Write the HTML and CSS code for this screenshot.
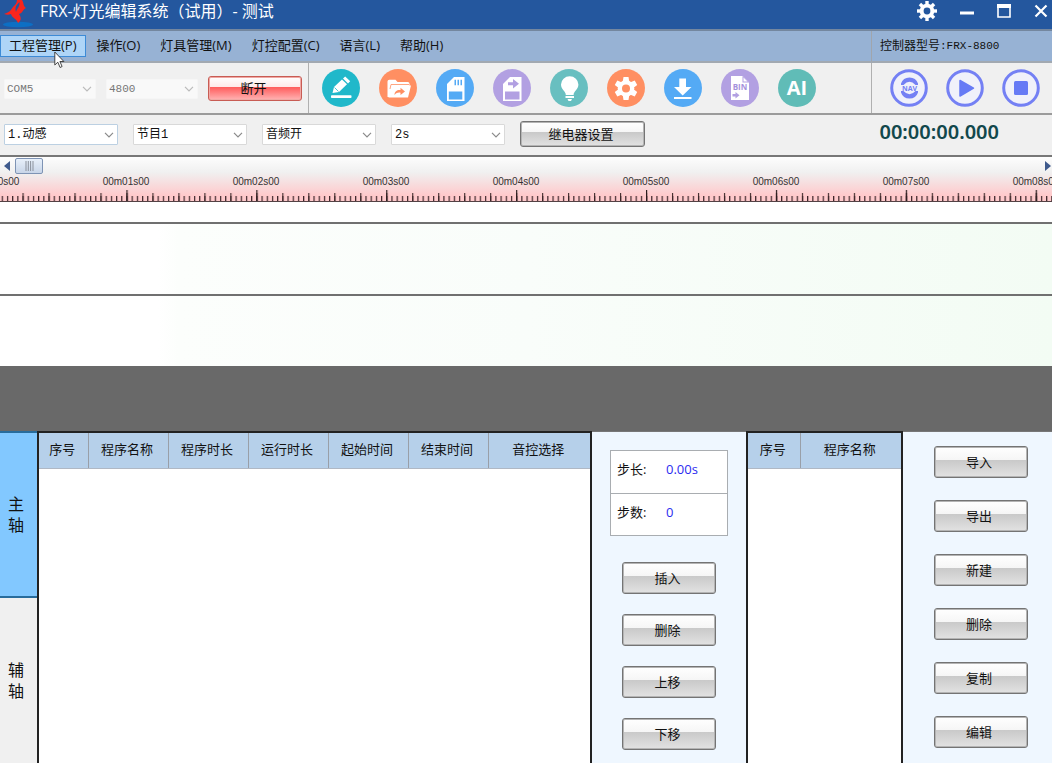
FILE: index.html
```html
<!DOCTYPE html>
<html lang="zh-CN">
<head>
<meta charset="utf-8">
<title>FRX-灯光编辑系统（试用）- 测试</title>
<link rel="stylesheet" href="styles.css">
</head>
<body>
<div class="app">
  <header class="titlebar">
    <svg class="logo" viewBox="0 0 32 28" aria-hidden="true">
      <ellipse cx="15" cy="24.500" rx="15" ry="2.800" fill="#0d6fc4"/>
      <path d="M14 0c0 3-2 5-4 7-2 3-3 5-9 7 3 1 5 1 7 0 1 4 5 4 7 9 4-3 3-6 1-9 4-1 3-4 7-6-3-2-2-5-4-8z" fill="#f8251c"/>
      <path d="M16.500 2c-3 3-5 5-3.500 10 1-4 4-5 3.500-10z" fill="#24579e"/>
    </svg>
    <h1 class="title">FRX-灯光编辑系统（试用）- 测试</h1>
    <div class="window-controls">
      <button class="window-btn" aria-label="设置"><svg viewBox="0 0 20 20" width="20" height="20"><g fill="#fff"><path d="M8.300 0h3.400v20H8.300z"/><path d="M8.300 0h3.400v20H8.300z" transform="rotate(45 10 10)"/><path d="M8.300 0h3.400v20H8.300z" transform="rotate(90 10 10)"/><path d="M8.300 0h3.400v20H8.300z" transform="rotate(135 10 10)"/><circle cx="10" cy="10" r="7.300"/></g><circle cx="10" cy="10" r="3.400" fill="#24579e"/></svg></button>
      <button class="window-btn" aria-label="最小化"><svg viewBox="0 0 14 14" width="14" height="14"><path d="M0 7.500h14v3H0z" fill="#fff"/></svg></button>
      <button class="window-btn" aria-label="最大化"><svg viewBox="0 0 14 14" width="14" height="14"><path d="M1 2h12v11H1z" fill="none" stroke="#fff" stroke-width="1.600"/><path d="M0 0h14v4H0z" fill="#fff"/></svg></button>
      <button class="window-btn" aria-label="关闭"><svg viewBox="0 0 14 14" width="14" height="14"><path d="M1.500 1.500l11 11M12.500 1.500l-11 11" stroke="#fff" stroke-width="2.200"/></svg></button>
    </div>
  </header>

  <nav class="menubar">
    <button class="menu-item menu-item-active">工程管理(P)
      <svg class="cursor" viewBox="0 0 11 18" width="11" height="18" aria-hidden="true"><path d="M.8 1v13l3-2.800 2.300 5.300 2-1-2.200-5h4z" fill="#fff" stroke="#333" stroke-width=".9"/></svg>
    </button>
    <button class="menu-item">操作(O)</button>
    <button class="menu-item">灯具管理(M)</button>
    <button class="menu-item">灯控配置(C)</button>
    <button class="menu-item">语言(L)</button>
    <button class="menu-item">帮助(H)</button>
    <p class="model">控制器型号<span class="model-code">:FRX-8800</span></p>
  </nav>

  <div class="toolbar">
    <div class="connection">
      <div class="combo combo-disabled"><select aria-label="串口" disabled><option>COM5</option></select><svg class="chevron" viewBox="0 0 10 6"><path d="M1 .8l4 4 4-4"/></svg></div>
      <div class="combo combo-disabled"><select aria-label="波特率" disabled><option>4800</option></select><svg class="chevron" viewBox="0 0 10 6"><path d="M1 .8l4 4 4-4"/></svg></div>
      <button class="push push-red">断开</button>
    </div>
    <div class="tools">
      <button class="tool" aria-label="编辑"><svg viewBox="0 0 38 38"><circle cx="19" cy="19" r="19" fill="#20b8ca"/><g fill="#fff"><path d="M10.500 24l1.500-6L20 10.500l5 4.800-8 7.700z"/><path d="M21 9.500l2.200-2 5 4.700-2.200 2.200z"/><rect x="9" y="26.300" width="20.500" height="2.700" rx=".8"/></g><path d="M12.500 18.500l4 4" stroke="#20b8ca" stroke-width=".8"/></svg></button>
      <button class="tool" aria-label="打开"><svg viewBox="0 0 38 38"><circle cx="19" cy="19" r="19" fill="#ff8f62"/><path d="M8.500 28V12.500q0-1.800 1.800-1.800h6.200l2 2.300h10.300q1.700 0 1.700 1.700V17H14l-4 11z" fill="#fff"/><path d="M12 16.500h20l-3 12H9.500z" fill="#fff"/><path d="M11 20l1-4.500h18" fill="none" stroke="#ff8f62" stroke-width=".8"/><path d="M15.500 26c0-4 3-5.500 6-5v-2.300l4.500 3.800-4.500 3.500v-2.300c-2-.5-4 0-6 2.300z" fill="#ff8f62"/></svg></button>
      <button class="tool" aria-label="保存"><svg viewBox="0 0 38 38"><circle cx="19" cy="19" r="19" fill="#54aaf5"/><path d="M11 32V15l7-7h10.500v24z" fill="#fff"/><path d="M12.800 22.500h13.500v8H12.800zM18.500 10.800H20v5.500h-1.500zM21.500 10.800H23v5.500h-1.500zM24.500 10.800H26v5.500h-1.500z" fill="#54aaf5"/></svg></button>
      <button class="tool" aria-label="另存为"><svg viewBox="0 0 38 38"><circle cx="19" cy="19" r="19" fill="#b2a0e2"/><path d="M10 32V15l7-7h11.500v24z" fill="#fff"/><path d="M12 22.500h14.500v8H12zM15 13.300h5v-3.300l6 4.800-6 4.700v-3.300h-5z" fill="#b2a0e2"/></svg></button>
      <button class="tool" aria-label="灯具"><svg viewBox="0 0 38 38"><circle cx="19" cy="19" r="19" fill="#68bfc0"/><path d="M15.800 26c0-4-4.800-5.500-4.800-10.500a8.700 8.200 0 0 1 17.400 0c0 5-4.800 6.500-4.800 10.500zM15.500 27h8.500v2h-8.500zM17.500 30h4.500l-1 2h-2.500z" fill="#fff"/></svg></button>
      <button class="tool" aria-label="设置"><svg viewBox="0 0 38 38"><circle cx="19" cy="19" r="19" fill="#ff8f62"/><g fill="#fff"><path d="M16.500 8h5l.8 5h-6.600zM16.500 31h5l.8-5h-6.600z"/><path d="M16.500 8h5l.8 5h-6.600zM16.500 31h5l.8-5h-6.600z" transform="rotate(60 19 19.500)"/><path d="M16.500 8h5l.8 5h-6.600zM16.500 31h5l.8-5h-6.600z" transform="rotate(120 19 19.500)"/><circle cx="19" cy="19.500" r="8.300"/></g><circle cx="19" cy="19.500" r="4" fill="#ff8f62"/></svg></button>
      <button class="tool" aria-label="下载"><svg viewBox="0 0 38 38"><circle cx="19" cy="19" r="19" fill="#54aaf5"/><path d="M15.300 9.500h6.700v8.500h5.500L18.700 26.500 10 18h5.300zM10 28h17.500v2H10z" fill="#fff"/></svg></button>
      <button class="tool" aria-label="导出BIN"><svg viewBox="0 0 38 38"><circle cx="19" cy="19" r="19" fill="#b2a0e2"/><path d="M10 7h11.500l6.500 6.500V31H10z" fill="#fff"/><path d="M21.500 7v6.500H28M11.500 25h3v-2l4 3.300-4 3.300v-2h-3z" fill="#b2a0e2"/><path d="M22.500 8.500v4h4z" fill="#fff"/><text class="bin-label" x="19" y="20.500" text-anchor="middle">BIN</text></svg></button>
      <button class="tool" aria-label="AI"><svg viewBox="0 0 38 38"><circle cx="19" cy="19" r="19" fill="#60bcb7"/><text class="ai-label" x="19" y="26" text-anchor="middle">AI</text></svg></button>
    </div>
    <div class="transport">
      <button class="tool" aria-label="循环"><svg viewBox="0 0 38 38"><circle cx="19" cy="19" r="17.300" fill="#f0f1fa" stroke="#7480f4" stroke-width="3"/><path d="M11 14.500q2-6 8.500-6t8.500 6v1.500h-2.500q-6-6.500-12 0H11zM11 23.500q2 6 8.500 6t8.500-6V22h-2.500q-6 6.500-12 0H11z" fill="#7480f4"/><text class="nav-label" x="19.500" y="21.500" text-anchor="middle">NAV</text></svg></button>
      <button class="tool" aria-label="播放"><svg viewBox="0 0 38 38"><circle cx="19" cy="19" r="17.300" fill="#f0f1fa" stroke="#7480f4" stroke-width="3"/><path d="M14 11.500v15.500l13.500-7.800z" fill="#667af5" stroke="#667af5" stroke-width="1.500" stroke-linejoin="round"/></svg></button>
      <button class="tool" aria-label="停止"><svg viewBox="0 0 38 38"><circle cx="19" cy="19" r="17.300" fill="#f0f1fa" stroke="#7480f4" stroke-width="3"/><rect x="12" y="12" width="14" height="14" rx="1.500" fill="#667af5"/></svg></button>
    </div>
  </div>

  <div class="options">
    <div class="combo combo-focus"><select aria-label="模式"><option>1.动感</option></select><svg class="chevron" viewBox="0 0 10 6"><path d="M1 .8l4 4 4-4"/></svg></div>
    <div class="combo"><select aria-label="节目"><option>节目1</option></select><svg class="chevron" viewBox="0 0 10 6"><path d="M1 .8l4 4 4-4"/></svg></div>
    <div class="combo"><select aria-label="音频"><option>音频开</option></select><svg class="chevron" viewBox="0 0 10 6"><path d="M1 .8l4 4 4-4"/></svg></div>
    <div class="combo"><select aria-label="间隔"><option>2s</option></select><svg class="chevron" viewBox="0 0 10 6"><path d="M1 .8l4 4 4-4"/></svg></div>
    <button class="push push-wide">继电器设置</button>
    <time class="clock">00:00:00.000</time>
  </div>

  <section class="timeline">
    <div class="ruler">
      <div class="scroller">
        <button class="scroll-arrow" aria-label="向左"><svg viewBox="0 0 6 10" width="6" height="10"><path d="M6 0v10L0 5z" fill="#3f5a8c"/></svg></button>
        <div class="thumb"><svg viewBox="0 0 9 10" width="9" height="10"><path d="M1 0v10M3.300 0v10M5.600 0v10M8 0v10" stroke="#8b919c"/></svg></div>
        <button class="scroll-arrow scroll-right" aria-label="向右"><svg viewBox="0 0 6 10" width="6" height="10"><path d="M0 0v10l6-5z" fill="#3f5a8c"/></svg></button>
      </div>
      <div class="marks"><span>00m00s00</span><span>00m01s00</span><span>00m02s00</span><span>00m03s00</span><span>00m04s00</span><span>00m05s00</span><span>00m06s00</span><span>00m07s00</span><span>00m08s00</span></div>
      <svg class="ticks" aria-hidden="true">
        <defs>
          <pattern id="minor" width="5.196" height="12" x="-3.500" patternUnits="userSpaceOnUse"><path d="M.6 7v5" stroke="#3d262a" stroke-width="1.200"/></pattern>
          <pattern id="mid" width="25.980" height="12" x="-3.500" patternUnits="userSpaceOnUse"><path d="M.6 4v8" stroke="#3a2628" stroke-width="1.100"/></pattern>
          <pattern id="major" width="129.900" height="12" x="-3.500" patternUnits="userSpaceOnUse"><path d="M.6 1v11" stroke="#2c1c1e" stroke-width="1.200"/></pattern>
        </defs>
        <rect width="100%" height="12" fill="url(#minor)"/><rect width="100%" height="12" fill="url(#mid)"/><rect width="100%" height="12" fill="url(#major)"/>
      </svg>
    </div>
    <div class="track-head"></div>
    <div class="track"></div>
    <div class="track"></div>
    <div class="gap"></div>
  </section>

  <main class="workspace">
    <div class="axis-tabs">
      <button class="axis axis-active">主<br>轴</button>
      <button class="axis">辅<br>轴</button>
    </div>
    <div class="grid-pane">
      <table class="grid">
        <colgroup><col class="w-index"><col class="w-field"><col class="w-field"><col class="w-field"><col class="w-field"><col class="w-field"><col></colgroup>
        <thead><tr><th>序号</th><th>程序名称</th><th>程序时长</th><th>运行时长</th><th>起始时间</th><th>结束时间</th><th>音控选择</th></tr></thead>
      </table>
    </div>
    <div class="actions">
      <dl class="stats">
        <div class="stat"><dt>步长:</dt><dd>0.00s</dd></div>
        <div class="stat"><dt>步数:</dt><dd>0</dd></div>
      </dl>
      <div class="stack stack-tight">
        <button class="push">插入</button>
        <button class="push">删除</button>
        <button class="push">上移</button>
        <button class="push">下移</button>
      </div>
    </div>
    <div class="grid-pane">
      <table class="grid">
        <colgroup><col class="w-number"><col></colgroup>
        <thead><tr><th>序号</th><th>程序名称</th></tr></thead>
      </table>
    </div>
    <div class="actions actions-files">
      <div class="stack">
        <button class="push">导入</button>
        <button class="push">导出</button>
        <button class="push">新建</button>
        <button class="push">删除</button>
        <button class="push">复制</button>
        <button class="push">编辑</button>
      </div>
    </div>
  </main>
</div>
</body>
</html>
```

FILE: styles.css
```css
* { box-sizing: border-box; }

body {
  margin: 0;
  background: #efefef;
  color: #111;
  font: 13px/18px "Open Sans", "Noto Sans CJK SC", sans-serif;
}

button, select { font: inherit; color: inherit; }
button { margin: 0; padding: 0; border: 0; background: none; }

.app {
  display: flex;
  flex-direction: column;
  min-height: 100vh;
  overflow: hidden;
}

/* Title bar */
.titlebar {
  display: flex;
  align-items: flex-start;
  height: 31px;
  padding-left: 3px;
  background: #24579e;
  border-bottom: 2px solid #74879f;
  color: #fff;
}
.logo { width: 32px; height: 28px; }
.title {
  margin: 0 0 0 5px;
  font-size: 16px;
  font-weight: 400;
  line-height: 22px;
  white-space: nowrap;
}
.window-controls { display: flex; margin-left: auto; padding-right: 4px; gap: 23px; }
.window-btn { display: flex; align-items: center; height: 21px; }

/* Menu */
.menubar {
  display: flex;
  align-items: center;
  gap: 2px;
  height: 32px;
  background: #97b2d4;
  border-bottom: 2px solid #a2a9b1;
}
.menu-item {
  position: relative;
  height: 22px;
  padding: 0 8px 2px;
  border: 1px solid transparent;
  white-space: nowrap;
}
.menu-item-active { background: #aed5f7; border-color: #3d8bd6; }
.cursor { position: absolute; left: 53px; top: 15px; z-index: 1; }
.model {
  display: flex;
  align-items: center;
  align-self: stretch;
  width: 181px;
  margin: 0 0 0 auto;
  padding-left: 8px;
  border-left: 1px solid #a0a5ac;
  font-size: 12px;
}
.model-code { font-family: "Liberation Mono", monospace; font-size: 11px; }

/* Toolbar */
.toolbar {
  display: flex;
  height: 52px;
  background: #f0f0f0;
  border-bottom: 2px solid #9b9b9b;
}
.connection {
  display: flex;
  align-items: center;
  gap: 10px;
  width: 309px;
  padding-left: 4px;
  border-right: 1px solid #b0b0b0;
}
.tools { display: flex; align-items: center; gap: 19px; padding-left: 13px; }
.transport {
  display: flex;
  align-items: center;
  gap: 18px;
  width: 181px;
  margin-left: auto;
  padding-left: 18px;
  border-left: 1px solid #b0b0b0;
}
.tool { width: 38px; height: 38px; border-radius: 50%; }
.tool svg { display: block; width: 38px; height: 38px; }
.bin-label { font: 700 8px "Open Sans", sans-serif; fill: #a592dc; }
.ai-label { font: 700 20px "Open Sans", sans-serif; fill: #fff; }
.nav-label { font: 700 7px "Open Sans", sans-serif; fill: #7480f4; }

.combo { position: relative; width: 114px; height: 21px; }
.combo select {
  width: 100%;
  height: 100%;
  padding: 0 18px 0 3px;
  border: 1px solid #d9d9d9;
  border-radius: 1px;
  background: #fff;
  appearance: none;
  font: 12px/18px "Liberation Mono", "Noto Sans CJK SC", monospace;
}
.combo-focus select { border-color: #bcd0e2; }
.combo-disabled { width: 92px; height: 20px; }
.combo-disabled select {
  padding-left: 2px;
  border-color: #f6f6f6;
  background: #f9f9f9;
  color: #777;
  opacity: 1;
  font-size: 11px;
}
.chevron {
  position: absolute;
  right: 4px;
  top: 8px;
  width: 10px;
  height: 6px;
  fill: none;
  stroke: #8a8a8a;
  stroke-width: 1.2;
  pointer-events: none;
}
.combo-disabled .chevron { stroke: #bbb; }

.push {
  width: 94px;
  height: 32px;
  padding: 0 3px 1px 0;
  border: 1px solid #747474;
  border-radius: 3px;
  background: linear-gradient(#fff, #f6f6f6 42%, #c9c9c9 43%, #e2e2e2);
  box-shadow: inset 0 0 0 1px #b4b4b4;
}
.push-red {
  height: 25px;
  border-color: #c85c54;
  background: linear-gradient(#fff, #ffe9e9 42%, #ff5c5c 44%, #ffb4b4);
  box-shadow: inset 0 0 0 1px #f0a8a4;
}
.push-wide { width: 125px; height: 26px; }

/* Options */
.options {
  display: flex;
  align-items: center;
  gap: 15px;
  height: 42px;
  padding: 0 0 2px 4px;
  background: #f0f0f0;
  border-bottom: 2px solid #777;
}
.clock {
  align-self: flex-start;
  margin: 0 53px 0 auto;
  color: #12484c;
  font: 600 20px/34px "Noto Sans", "Open Sans", sans-serif;
}

/* Timeline */
.ruler {
  height: 45px;
  overflow: hidden;
  background: linear-gradient(#fdfdfd, #f0f0f0 35%, #ffc9cb 88%);
  border-bottom: 1px solid #544245;
}
.scroller { display: flex; align-items: center; height: 18px; padding: 0 1px 0 4px; }
.scroll-arrow { display: flex; }
.scroll-right { margin-left: auto; }
.thumb {
  display: flex;
  align-items: center;
  justify-content: center;
  width: 28px;
  height: 16px;
  margin-left: 5px;
  border: 1px solid #7e93b4;
  border-radius: 2px;
  background: linear-gradient(#e8f0fa, #c8d5e8);
}
.marks { display: flex; margin-left: -69px; }
.marks span {
  flex: 0 0 130px;
  color: #333;
  font: 10px/14px "Liberation Sans", sans-serif;
  text-align: center;
}
.ticks { display: block; width: 100%; height: 12px; }
.track-head { height: 20px; background: #fff; }
.track {
  height: 72px;
  border-top: 2px solid #707070;
  background: linear-gradient(90deg, #fff 15%, #fcfefc 17%, #f9fdfa 50%, #f3fcf4);
}
.gap { height: 65px; background: #696969; }

/* Workspace */
.workspace {
  display: grid;
  flex: 1;
  grid-template-columns: 37px 555fr 154px 157fr 149px;
}
.axis-tabs { display: grid; grid-template-rows: 167px 1fr; }
.axis { padding-right: 5px; font-size: 16px; line-height: 21px; background: #f0f0f0; }
.axis-active { background: #82c8ff; border: 1px solid #286c9c; border-width: 2px 0; }
.grid-pane { border: 2px solid #222; border-bottom: 0; background: #fff; }
.grid { width: 100%; border-collapse: collapse; table-layout: fixed; }
.grid th {
  height: 35px;
  padding: 0 2px 2px 0;
  border-right: 1px solid #999fa8;
  border-bottom: 1px solid #b0b8c4;
  background: #b6d0ea;
  font-weight: 400;
}
.grid th:last-child { border-right: 0; }
.w-index { width: 49px; }
.w-field { width: 80px; }
.w-number { width: 52px; }

.actions {
  display: flex;
  flex-direction: column;
  align-items: center;
  padding-top: 18px;
  border-top: 1px solid #777;
  background: #eff7ff;
}
.actions-files { padding: 14px 0 0 6px; }
.stats {
  width: 118px;
  margin: 0 0 26px;
  border: 1px solid #a9adb1;
  background: #fff;
}
.stat { display: flex; height: 42px; padding: 9px 0 0 6px; }
.stat + .stat { border-top: 1px solid #a9adb1; }
.stat dt { width: 49px; }
.stat dd { margin: 0; color: #2b2bf0; }
.stack { display: flex; flex-direction: column; gap: 22px; }
.stack-tight { gap: 20px; }
```
